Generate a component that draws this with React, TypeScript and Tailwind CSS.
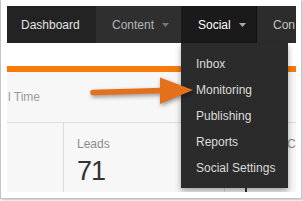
import React from 'react';

const font = { fontFamily: '"Liberation Sans", Arial, sans-serif' };

function Caret({ color }: { color: string }) {
  return (
    <svg width="7" height="4" viewBox="0 0 7 4" className="ml-[8px] mt-[1px] shrink-0">
      <path d="M0 0 L7 0 L3.5 4 Z" fill={color} />
    </svg>
  );
}

const menuItems = ['Inbox', 'Monitoring', 'Publishing', 'Reports', 'Social Settings'];

export default function App() {
  return (
    <div className="w-[303px] h-[201px] bg-white overflow-hidden" style={font}>
      <div className="w-[302px] h-[199px] border-x border-b border-[#c4c4c4] shadow-[1px_1px_2px_rgba(0,0,0,0.25)] pl-[6px] pr-[5px] pt-[6px] pb-[6px]">
        <div className="relative w-[289px] h-[186px] overflow-hidden">
          {/* top nav */}
          <div className="flex h-[37px] text-[12px]">
            <div className="w-[89px] shrink-0 bg-[#232323] text-[#e4e4e4] flex items-center pl-[14px]">Dashboard</div>
            <div className="w-[85px] shrink-0 bg-[#2f2f2f] text-[#b5b5b5] flex items-center pl-[16px]">
              Content
              <Caret color="#777" />
            </div>
            <div className="w-[76px] shrink-0 bg-[#1a1a1a] text-white flex items-center pl-[17px] border-r border-[#111]">
              Social
              <Caret color="#aaa" />
            </div>
            <div className="flex-1 min-w-0 bg-[#2c2c2c] text-[#c4c4c4] flex items-center pl-[16px]">Con</div>
          </div>

          <div className="h-[23px] bg-white" />
          <div className="h-[6px] bg-[#f77a0b]" />

          <div className="bg-[#f7f7f7] h-[120px]">
            <div className="h-[51px] border-b border-[#dcdcdc] flex items-center text-[12px] text-[#9a9a9a] pl-[1px]">
              l Time
            </div>
            <div className="flex h-[69px]">
              <div className="w-[57px] shrink-0 border-r border-[#dcdcdc]" />
              <div className="w-[161px] shrink-0 border-r border-[#dcdcdc] pl-[13px] pt-[15px]">
                <div className="text-[12px] leading-[12px] text-[#8a8a8a]">Leads</div>
                <div className="mt-[8px] text-[27px] leading-[27px] tracking-[-1px] text-[#333]">71</div>
              </div>
              <div className="flex-1 min-w-0 relative pt-[15px]">
                <div className="absolute left-[20px] top-[52px] w-[2px] h-[20px] bg-[#333]" />
                <div className="text-[12px] leading-[12px] text-[#8a8a8a] pl-[62px]">C</div>
              </div>
            </div>
          </div>

          {/* dropdown */}
          <div className="absolute left-[174px] top-[37px] w-[107px] h-[145px] bg-[#2b2b2b] shadow-[0_3px_6px_rgba(0,0,0,0.35)] pt-[8px] text-[12px] text-[#dcdcdc]">
            {menuItems.map((item) => (
              <div key={item} className="h-[26px] leading-[26px] pl-[15px] whitespace-nowrap">
                {item}
              </div>
            ))}
          </div>

          {/* callout arrow */}
          <svg
            className="absolute left-0 top-0 drop-shadow-[1px_2px_2px_rgba(0,0,0,0.4)]"
            width="289"
            height="186"
            viewBox="0 0 289 186"
          >
            <line x1="86" y1="86.5" x2="156" y2="84.5" stroke="#e5701c" strokeWidth="5.5" strokeLinecap="round" />
            <path d="M153 71.5 L186 84 L153 98 Z" fill="#e5701c" />
          </svg>
        </div>
      </div>
    </div>
  );
}
